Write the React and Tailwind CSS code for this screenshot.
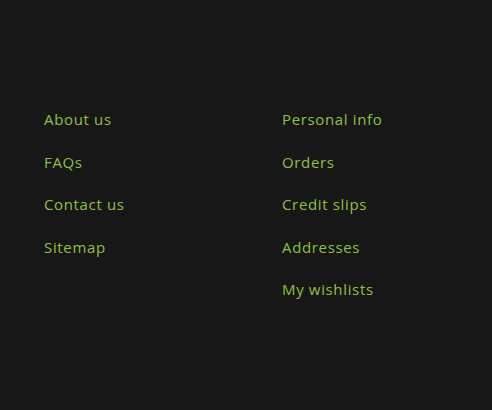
import React from "react";

const left = ["About us", "FAQs", "Contact us", "Sitemap"];
const right = ["Personal info", "Orders", "Credit slips", "Addresses", "My wishlists"];

const LinkList = ({ items }) => (
  <ul className="flex flex-col gap-[21px]">
    {items.map((item) => (
      <li key={item} className="leading-[21.5px]">
        <a href="#" className="text-[#8dc047] tracking-[0.65px]">
          {item}
        </a>
      </li>
    ))}
  </ul>
);

export default function App() {
  return (
    <div
      className="w-[492px] h-[410px] bg-[#171717] pt-[109px] pl-[44px] text-[15px]"
      style={{ fontFamily: '"Open Sans", "Liberation Sans", sans-serif' }}
    >
      <div className="grid grid-cols-[238px_1fr]">
        <LinkList items={left} />
        <LinkList items={right} />
      </div>
    </div>
  );
}
